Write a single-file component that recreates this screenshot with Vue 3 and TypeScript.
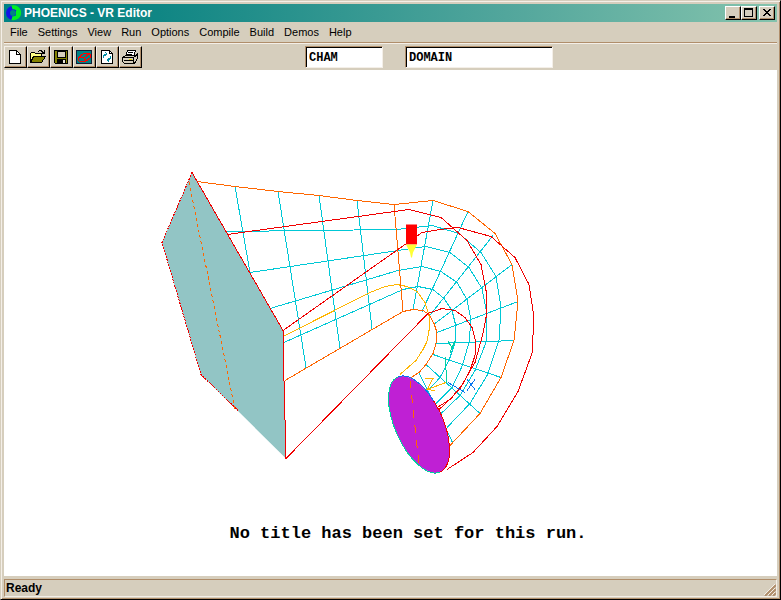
<script setup lang="ts">
import { ref } from 'vue'

interface Line {
  kind: string
  points: string
}

const menus: string[] = ['File', 'Settings', 'View', 'Run', 'Options', 'Compile', 'Build', 'Demos', 'Help']

const userName = ref('CHAM')
const objectName = ref('DOMAIN')

const gridLines: Line[] = [
  // ribs across the duct
  { kind: 'cyan', points: '235,186 250,272' },
  { kind: 'cyan', points: '278,191 306,367' },
  { kind: 'cyan', points: '319,195 340,348' },
  { kind: 'cyan', points: '357,200 372,328' },
  { kind: 'cyan', points: '433,200 413,309' },
  { kind: 'cyan', points: '468,211 422,311' },
  { kind: 'cyan', points: '493,235 429,316' },
  { kind: 'cyan', points: '512,264 435,323' },
  { kind: 'cyan', points: '518,301 437,332' },
  { kind: 'cyan', points: '514,340 436,343' },
  { kind: 'cyan', points: '501,377 433,354' },
  { kind: 'cyan', points: '480,413 426,364' },
  { kind: 'cyan', points: '453,443 419,372' },
  // lines along the duct
  { kind: 'cyan', points: '226,231 397,229 432,225 459,233 481,252 496,276 501,307 499,340 487,375 470,403 447,427' },
  { kind: 'cyan', points: '250,272 398,250 426,246 450,252 469,267 482,288 487,314 486,342 475,370 460,395 438,416' },
  { kind: 'cyan', points: '270,308 398,270 422,266 441,271 457,282 467,299 471,319 469,342 462,366 452,387 433,406' },
  { kind: 'cyan', points: '284,342 403,289 418,286 433,289 444,298 452,310 455,322 455,342 449,360 440,377 429,389' },
  { kind: 'amber', points: '283,336 370,292 385,286 397,284 407,286 417,291 425,302 429,315 429,330 427,341 423,349 416,360 400,374' },
  { kind: 'orange', points: '197,181 235,186 278,191 319,195 357,200 394,204 433,200 468,211 495,233 512,264 518,301 514,340 501,377 480,413 450,445' },
  { kind: 'orange', points: '394,204 403,311' },
  { kind: 'orange', points: '285,380 403,311 413,309 423,310 429,314 434,323 437,332 436,343 433,353 426,364 419,372 411,377' },
  { kind: 'red', points: '227,234 409,209 441,217 467,240 481,264 486,290 486,317 483,333 475,362 468,374 460,388 450,399 437,407' },
  { kind: 'red', points: '283,330 405,244 422,232 440,229 458,227 491,236 515,257 529,284 534,317 532,353 518,391 497,426 473,452 447,469' },
  { kind: 'red', points: '286,458 428,313 442,308 455,310 465,317 472,327 476,342 475,355 470,370 463,383 452,397 438,410' },
]

const axisLines: Line[] = [
  { kind: 'teal', points: '445,356 447,382' },
  { kind: 'teal', points: '448,341 452,347 455,341' },
  { kind: 'teal', points: '452,347 450,352' },
  { kind: 'amber', points: '446,382 427,389' },
  { kind: 'amber', points: '425,378 433,378 427,389 435,390' },
  { kind: 'blue', points: '448,382 465,392' },
  { kind: 'blue', points: '467,379 475,389' },
  { kind: 'blue', points: '475,379 467,390' },
]
</script>

<template>
  <main class="window">
    <header class="titlebar">
      <svg class="logo" viewBox="0 0 16 16" aria-hidden="true">
        <circle cx="7" cy="8" r="5" fill="none" stroke="#1414e6" stroke-width="4" />
        <path d="M6 2.500A5.500 5.500 0 1 1 6 13" fill="none" stroke="#00f020" stroke-width="4" />
        <path d="M10 6h3v4h-3z" fill="#00f020" />
      </svg>
      <h1 class="caption">PHOENICS - VR Editor</h1>
      <div class="controls">
        <button type="button" class="control" aria-label="Minimize">
          <svg viewBox="0 0 14 12"><path d="M3 9h6v2H3z" /></svg>
        </button>
        <button type="button" class="control" aria-label="Maximize">
          <svg viewBox="0 0 14 12"><path d="M2 1h9v9H2zM3 3v6h7V3z" fill-rule="evenodd" /></svg>
        </button>
        <button type="button" class="control close" aria-label="Close">
          <svg viewBox="0 0 14 12"><path d="M3 2h2v1h1v1h2V3h1V2h2v1h-1v1H9v1H8v1h1v1h1v1h1v1H9V8H8V7H6v1H5v1H3V8h1V7h1V6h1V5H5V4H4V3H3z" /></svg>
        </button>
      </div>
    </header>

    <nav class="menubar">
      <button v-for="item in menus" :key="item" type="button" class="menu">{{ item }}</button>
    </nav>

    <div class="toolbar">
      <div class="tools">
        <button type="button" class="tool" aria-label="New">
          <svg viewBox="0 0 18 16">
            <path d="M3.500 1.500h7l4 4v9h-11z" fill="#fff" stroke="#000" />
            <path d="M10.500 1.500v4h4" fill="none" stroke="#000" />
          </svg>
        </button>
        <button type="button" class="tool" aria-label="Open">
          <svg viewBox="0 0 18 16">
            <path d="M1.500 13.500v-9l1-1h3l1 1h6v3" fill="#ffff84" stroke="#000" />
            <path d="M1.500 13.500l3-6h12l-4 6z" fill="#848200" stroke="#000" />
            <path d="M9 2h1V1h3v1h1v1h1V1h1v4h-4V4h1V3h-1V2h-2v1H9z" fill="#000" />
          </svg>
        </button>
        <button type="button" class="tool" aria-label="Save">
          <svg viewBox="0 0 18 16">
            <path d="M2.500 1.500h13v13h-12l-1-1z" fill="#848200" stroke="#000" />
            <path d="M5 2h8v6H5z" fill="#d6cebd" stroke="#000" />
            <path d="M5 10h9v4H5z" fill="#000" />
            <path d="M11 11h2v3h-2z" fill="#e7e3d6" />
          </svg>
        </button>
        <button type="button" class="tool" aria-label="Wireframe">
          <svg viewBox="0 0 18 16">
            <path d="M1.500 1.500h15v13h-15z" fill="#008284" stroke="#102038" />
            <path d="M3.500 8.500l5-4h6l1 2v2l-5 4h-6l-1-1zM3.500 8.500h6l5-4M9.500 8.500l1 4" fill="none" stroke="#f00" />
          </svg>
        </button>
        <button type="button" class="tool" aria-label="Refresh">
          <svg viewBox="0 0 18 16">
            <path d="M3.500 1.500h8l3 3v10h-11z" fill="#fff" stroke="#000" />
            <path d="M11.500 1.500v3h3" fill="none" stroke="#000" />
            <path d="M5.500 9V7l2-2h1M7 3l2 2-2 2M12.500 7v2l-2 2h-1M11 9l-2 2 2 2" fill="none" stroke="#008ea5" />
          </svg>
        </button>
        <button type="button" class="tool" aria-label="Print">
          <svg viewBox="0 0 18 16">
            <path d="M4.500 7.500l2-6h8l-2 6z" fill="#fff" stroke="#000" />
            <path d="M7 3.500h5M6 5.500h5" stroke="#000" />
            <path d="M1.500 8.500l3-2h10l2-2v5l-3 5h-10l-2-2z" fill="#d6cebd" stroke="#000" />
            <path d="M1.500 8.500h11v5M3 11.500h9M12.500 8.500l4-3" fill="none" stroke="#000" />
            <path d="M8 10h3v1H8z" fill="#e8d800" />
          </svg>
        </button>
      </div>
      <input v-model="userName" class="field user" type="text" aria-label="User" spellcheck="false" />
      <input v-model="objectName" class="field object" type="text" aria-label="Object" spellcheck="false" />
    </div>

    <section class="viewport">
      <svg class="scene" viewBox="4 70 773 505" role="img" aria-label="Duct geometry">
        <polyline v-for="(line, i) in gridLines" :key="i" :class="['line', line.kind]" :points="line.points" />
        <polyline v-for="(line, i) in axisLines" :key="'a' + i" :class="['line', line.kind]" :points="line.points" />

        <polygon class="inlet" points="192,172 283,330 284,380 286,458 201,374 162,242" />
        <polyline class="line red dotted" points="192,172 162,242 201,374 238,410" />
        <polyline class="line red" points="192,172 283,330 284,380 286,458" />
        <polyline class="line orange dashed" points="189,182 235,409" />

        <g transform="rotate(66 419 424)">
          <ellipse class="outlet" cx="419" cy="424" rx="52" ry="24" />
          <path class="line teal" d="M471 424A52 24 0 0 1 367 424" />
          <path class="line red" d="M403 401A52 24 0 0 1 471 424" />
          <path class="line blue" d="M367 424A52 24 0 0 1 403 401" />
        </g>
        <polyline class="line orange long-dashed" points="410,380 419,464" />

        <path d="M406 224h11v20h-11z" fill="#f00" />
        <path d="M406 244h11l-4 8-1 5h-1l-1-5z" fill="#ff3" />

        <text class="run-title" x="408" y="537">No title has been set for this run.</text>
      </svg>
    </section>

    <footer class="statusbar">
      <span class="status">Ready</span>
      <svg class="grip" viewBox="0 0 12 12" aria-hidden="true">
        <path d="M1 12L12 1M5 12l7-7M9 12l3-3" stroke="#b08e6b" stroke-width="2" />
        <path d="M0 11L11 0M4 11l7-7M8 11l3-3" stroke="#f4efe8" />
      </svg>
    </footer>
  </main>
</template>

<style>
body {
  margin: 0;
}
</style>

<style scoped>
.window {
  box-sizing: border-box;
  display: flex;
  flex-direction: column;
  height: 100vh;
  padding: 2px 3px 1px;
  background: #d6cebd;
  border: 1px solid #d6cebd;
  border-right-color: #000;
  border-bottom-color: #000;
  box-shadow: inset 1px 1px #f4efe8, inset -1px -1px #b08e6b;
  font-family: 'Liberation Sans', Arial, sans-serif;
  font-size: 11px;
  color: #000;
}

button {
  margin: 0;
  padding: 0;
  border: 0;
  background: #d6cebd;
  color: inherit;
  font: inherit;
}

svg {
  display: block;
}

.titlebar {
  display: flex;
  flex: none;
  align-items: center;
  height: 18px;
  margin-top: 1px;
  padding: 0 2px;
  background: linear-gradient(90deg, #008284 0%, #108684 20%, #52a69c 65%, #84c3ad 100%);
}

.logo {
  width: 16px;
  height: 16px;
}

.caption {
  flex: 1;
  margin: 0 0 0 2px;
  color: #fff;
  font-size: 12px;
  line-height: 18px;
  font-weight: bold;
  white-space: nowrap;
}

.controls {
  display: flex;
}

.control {
  box-sizing: border-box;
  width: 16px;
  height: 14px;
  border: 1px solid;
  border-color: #fff #000 #000 #fff;
  box-shadow: inset -1px -1px #b08e6b;
}

.control svg {
  width: 14px;
  height: 12px;
  shape-rendering: crispEdges;
}

.close {
  margin-left: 2px;
}

.menubar {
  display: flex;
  flex: none;
  gap: 10px;
  height: 20px;
  padding-left: 6px;
  border-bottom: 1px solid #b08e6b;
}

.menu {
  line-height: 20px;
}

.toolbar {
  display: flex;
  flex: none;
  align-items: flex-start;
  box-sizing: border-box;
  height: 27px;
  padding-top: 2px;
  border-top: 1px solid #f4efe8;
}

.tools {
  display: flex;
  margin-right: 163px;
}

.tool {
  box-sizing: border-box;
  width: 23px;
  height: 22px;
  padding: 2px 1px;
  border: 1px solid;
  border-color: #f4efe8 #000 #000 #f4efe8;
  box-shadow: inset -1px -1px #b08e6b;
}

.tool svg {
  width: 18px;
  height: 16px;
  shape-rendering: crispEdges;
}

.field {
  box-sizing: border-box;
  height: 22px;
  margin: 0;
  padding: 1px 3px 0;
  border: 1px solid;
  border-color: #b08e6b #f4efe8 #f4efe8 #b08e6b;
  border-radius: 0;
  outline: 0;
  background: #fff;
  box-shadow: inset 1px 1px #000;
  color: #000;
  font: bold 12px 'Liberation Mono', 'Courier New', monospace;
}

.user {
  width: 78px;
  margin-right: 22px;
}

.object {
  width: 148px;
}

.viewport {
  flex: 1;
  min-height: 0;
  background: #fff;
}

.scene {
  width: 100%;
  height: 100%;
}

.line {
  fill: none;
  stroke-width: 1;
  shape-rendering: crispEdges;
}

.cyan {
  stroke: #00c8d6;
}

.red {
  stroke: #f00000;
}

.orange {
  stroke: #ff6600;
}

.amber {
  stroke: #ffb500;
}

.teal {
  stroke: #00d0a0;
}

.blue {
  stroke: #0874f0;
}

.dotted {
  stroke-dasharray: 2 1;
}

.dashed {
  stroke-dasharray: 3 3;
}

.long-dashed {
  stroke-dasharray: 8 7;
}

.inlet {
  fill: #92c5c5;
}

.outlet {
  fill: #bf20d4;
}

.run-title {
  font: bold 17px 'Liberation Mono', 'Courier New', monospace;
  text-anchor: middle;
}

.statusbar {
  display: flex;
  flex: none;
  align-items: center;
  justify-content: space-between;
  box-sizing: border-box;
  height: 18px;
  margin: 3px 0 1px;
  border: 1px solid;
  border-color: #b08e6b #f4efe8 #f4efe8 #b08e6b;
}

.status {
  padding-left: 1px;
  font-size: 12px;
  font-weight: bold;
}

.grip {
  align-self: flex-end;
  width: 12px;
  height: 12px;
}
</style>
